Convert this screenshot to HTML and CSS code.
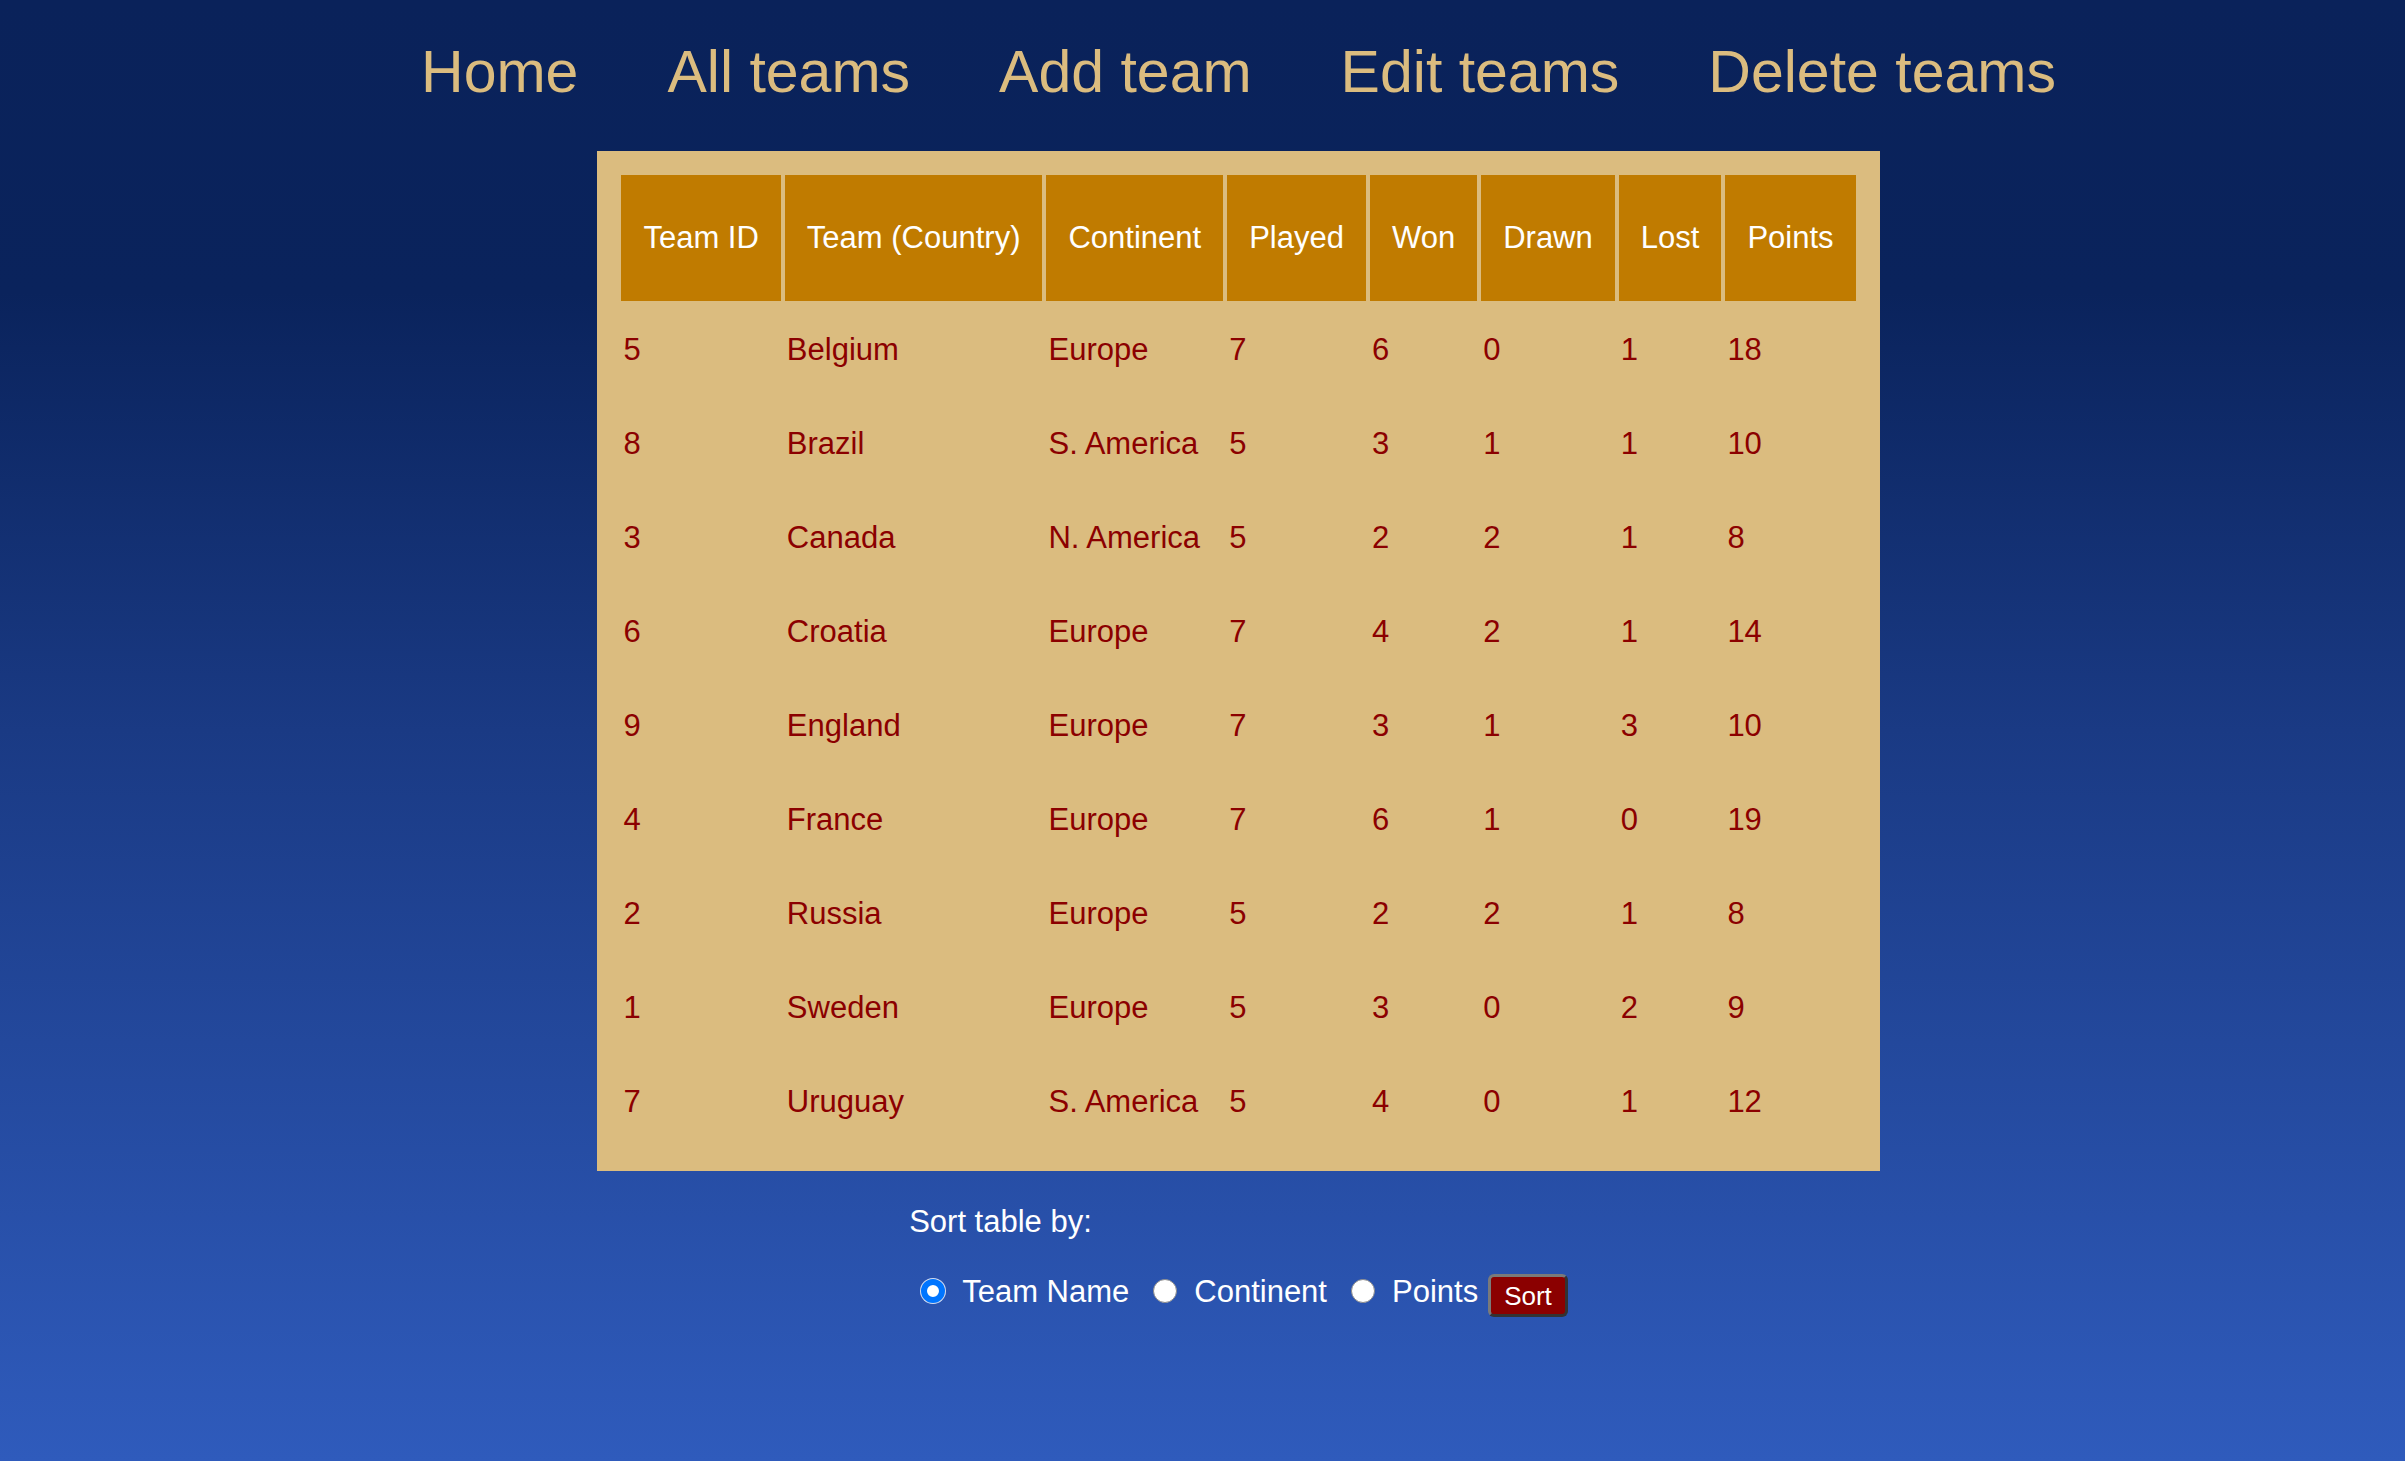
FILE: index.html
```html
<!DOCTYPE html>
<html lang="en">
<head>
<meta charset="utf-8">
<title>Teams</title>
<link rel="stylesheet" href="styles.css">
</head>
<body>
<div class="page">
  <nav class="nav">
    <a href="#" class="nav-link">Home</a>
    <a href="#" class="nav-link">All teams</a>
    <a href="#" class="nav-link">Add team</a>
    <a href="#" class="nav-link">Edit teams</a>
    <a href="#" class="nav-link">Delete teams</a>
  </nav>

  <div class="table-wrap">
    <table class="teams">
      <thead>
        <tr>
          <th>Team ID</th><th>Team (Country)</th><th>Continent</th><th>Played</th><th>Won</th><th>Drawn</th><th>Lost</th><th>Points</th>
        </tr>
      </thead>
      <tbody>
        <tr><td>5</td><td>Belgium</td><td>Europe</td><td>7</td><td>6</td><td>0</td><td>1</td><td>18</td></tr>
        <tr><td>8</td><td>Brazil</td><td>S. America</td><td>5</td><td>3</td><td>1</td><td>1</td><td>10</td></tr>
        <tr><td>3</td><td>Canada</td><td>N. America</td><td>5</td><td>2</td><td>2</td><td>1</td><td>8</td></tr>
        <tr><td>6</td><td>Croatia</td><td>Europe</td><td>7</td><td>4</td><td>2</td><td>1</td><td>14</td></tr>
        <tr><td>9</td><td>England</td><td>Europe</td><td>7</td><td>3</td><td>1</td><td>3</td><td>10</td></tr>
        <tr><td>4</td><td>France</td><td>Europe</td><td>7</td><td>6</td><td>1</td><td>0</td><td>19</td></tr>
        <tr><td>2</td><td>Russia</td><td>Europe</td><td>5</td><td>2</td><td>2</td><td>1</td><td>8</td></tr>
        <tr><td>1</td><td>Sweden</td><td>Europe</td><td>5</td><td>3</td><td>0</td><td>2</td><td>9</td></tr>
        <tr><td>7</td><td>Uruguay</td><td>S. America</td><td>5</td><td>4</td><td>0</td><td>1</td><td>12</td></tr>
      </tbody>
    </table>
  </div>

  <form class="sort">
    <div class="sort-title">Sort table by:</div>
    <div class="sort-row">
      <input type="radio" name="sort" class="radio" id="s1" checked>
      <label for="s1" class="sort-label">Team Name</label>
      <input type="radio" name="sort" class="radio" id="s2">
      <label for="s2" class="sort-label">Continent</label>
      <input type="radio" name="sort" class="radio" id="s3">
      <label for="s3" class="sort-label last">Points</label>
      <button type="button" class="sort-btn">Sort</button>
    </div>
  </form>
</div>
</body>
</html>
```

FILE: styles.css
```css
html {
  min-height: 100%;
  background: linear-gradient(to bottom, #0a225a 0%, #0a235c 20%, #1a3a84 50%, #2f5bbc 100%);
}

body {
  margin: 0;
  min-height: 100vh;
  font-family: "Liberation Sans", Arial, sans-serif;
}

.page {
  padding-left: 72px;
  display: flex;
  flex-direction: column;
  align-items: center;
}

.nav {
  margin-top: 38px;
  display: flex;
  gap: 89px;
  font-size: 59px;
  line-height: 68px;
}

.nav-link {
  color: #dbbc7f;
  text-decoration: none;
}

.table-wrap {
  margin-top: 45px;
  background: #dbbc7f;
  padding: 20px;
}

.teams {
  border-spacing: 4px;
  font-size: 31px;
  line-height: 36px;
}

.teams th {
  background: #c07b00;
  color: #ffffff;
  font-weight: normal;
  padding: 45px 22px;
  text-align: center;
  white-space: nowrap;
}

.teams td {
  color: #8b0000;
  padding: 27px 2px;
  text-align: left;
  white-space: nowrap;
}

.sort {
  margin-top: 33px;
  display: flex;
  flex-direction: column;
  color: #ffffff;
  font-size: 31px;
  line-height: 36px;
}

.sort-row {
  margin-top: 34px;
  display: flex;
  align-items: flex-start;
  padding-left: 12px;
}

.radio {
  appearance: none;
  -webkit-appearance: none;
  margin: 5px 17px 0 0;
  width: 24px;
  height: 24px;
  border-radius: 50%;
  background: #ffffff;
  border: 1px solid #8a8a8a;
  box-sizing: border-box;
  flex: none;
}

.radio:checked {
  border: 6px solid #0075ff;
  box-shadow: 0 0 0 1px rgba(255, 255, 255, 0.8);
  background: #ffffff;
}

.sort-label {
  margin-right: 24px;
  white-space: nowrap;
}

.sort-label.last {
  margin-right: 10px;
}

.sort-btn {
  font-family: "Liberation Sans", Arial, sans-serif;
  font-size: 26px;
  line-height: 30px;
  color: #ffffff;
  background: #8b0000;
  border: 3px solid;
  border-color: #7a7a7a #333333 #333333 #7a7a7a;
  border-radius: 6px;
  padding: 3.5px 13px;
  margin: 0;
}
```
